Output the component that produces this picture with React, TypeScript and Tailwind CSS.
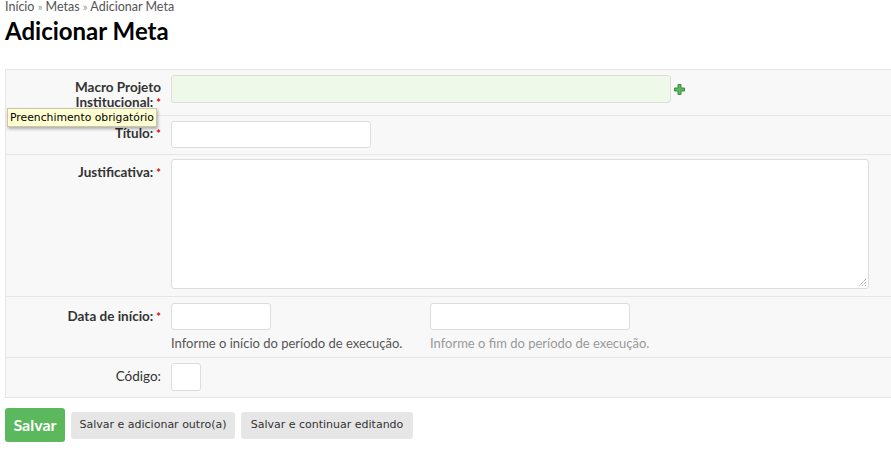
import React from 'react';

const lato = { fontFamily: 'Lato, "Liberation Sans", sans-serif' };
const dejavu = { fontFamily: '"DejaVu Sans", sans-serif' };

function Req() {
  return <span className="text-[#d00] text-[11px] align-top ml-[3px]">*</span>;
}

function Label({ children, bold = true, required = false }: { children: React.ReactNode; bold?: boolean; required?: boolean }) {
  return (
    <div className={`w-[160px] shrink-0 text-right pr-[5px] pt-[5px] text-[13.5px] leading-[15px] text-[#333] ${bold ? 'font-bold' : ''}`}>
      {children}
      {required && <Req />}
    </div>
  );
}

const inputCls = 'h-[27px] bg-white border border-[#ddd] rounded-[3px] block';

export default function App() {
  return (
    <div className="relative w-[891px] h-[460px] overflow-hidden bg-white" style={lato}>
      <div className="pl-[5px] pt-0 text-[12.5px] leading-[14px] text-[#555]">
        Início <span className="text-[#999] text-[11px]">»</span> Metas <span className="text-[#999] text-[11px]">»</span> Adicionar Meta
      </div>
      <h1 className="pl-[5px] mt-[2px] text-[24px] leading-[30px] font-bold text-black">Adicionar Meta</h1>

      <div className="ml-[5px] mt-[23px] w-[900px] bg-[#f8f8f8] border border-[#e6e6e6]">
        <div className="flex py-[5px]">
          <Label required>Macro Projeto<br />Institucional:</Label>
          <div className="ml-[5px] flex items-center gap-[3px] self-start">
            <div className="w-[500px] h-[28px] bg-[#eff9e9] border border-[#ddd] rounded-[3px]" />
            <svg width="11" height="11" viewBox="0 0 11 11">
              <path d="M4 0.5h3v3.5h3.5v3H7v3.5H4V7H0.5V4H4z" fill="#5cb85c" stroke="#3d8b3d" strokeWidth="1" />
            </svg>
          </div>
        </div>
        <div className="flex border-t border-[#e6e6e6] pt-[5px] pb-[6px]">
          <Label required>Título:</Label>
          <div className={`ml-[5px] w-[200px] ${inputCls}`} />
        </div>
        <div className="flex border-t border-[#e6e6e6] pt-[4px] pb-[7px]">
          <div className="pt-[1px]"><Label required>Justificativa:</Label></div>
          <div className="ml-[5px] relative w-[698px] h-[130px] bg-white border border-[#ddd] rounded-[3px]">
            <svg className="absolute right-[1px] bottom-[1px]" width="9" height="9" viewBox="0 0 9 9">
              <path d="M8 1L1 8M8 4L4 8M8 7L7 8" stroke="#777" strokeWidth="1" strokeDasharray="1 1" />
            </svg>
          </div>
        </div>
        <div className="flex border-t border-[#e6e6e6] pt-[6px] pb-[5px]">
          <div className="pt-[1px]"><Label required>Data de início:</Label></div>
          <div className="ml-[5px] w-[259px]">
            <div className={`w-[100px] ${inputCls}`} />
            <div className="mt-[5px] text-[13px] leading-[17px] text-[#555]">Informe o início do período de execução.</div>
          </div>
          <div>
            <div className={`w-[200px] ${inputCls}`} />
            <div className="mt-[5px] text-[13px] leading-[17px] text-[#999]">Informe o fim do período de execução.</div>
          </div>
        </div>
        <div className="flex border-t border-[#e6e6e6] pt-[5px] pb-[6px]">
          <div className="pt-[1px]"><Label bold={false}>Código:</Label></div>
          <div className="ml-[5px] w-[30px] h-[28px] bg-white border border-[#ddd] rounded-[3px]" />
        </div>
      </div>

      <div className="flex items-center ml-[5px] mt-[10px]">
        <button className="w-[60px] h-[34px] bg-[#5cb85c] rounded-[3px] text-white font-bold text-[16px]" style={lato}>Salvar</button>
        <button className="ml-[6px] w-[164px] h-[27px] bg-[#e6e6e6] rounded-[3px] text-[#333] text-[11px]" style={dejavu}>Salvar e adicionar outro(a)</button>
        <button className="ml-[6px] w-[172px] h-[27px] bg-[#e6e6e6] rounded-[3px] text-[#333] text-[11px]" style={dejavu}>Salvar e continuar editando</button>
      </div>

      <div
        className="absolute left-[7px] top-[108px] px-[2px] h-[19px] leading-[17px] bg-[#ffffd2] border border-[#c8c8a8] text-[10.8px] text-black shadow-[1px_2px_3px_rgba(0,0,0,0.3)]"
        style={dejavu}
      >
        Preenchimento obrigatório
      </div>
    </div>
  );
}
